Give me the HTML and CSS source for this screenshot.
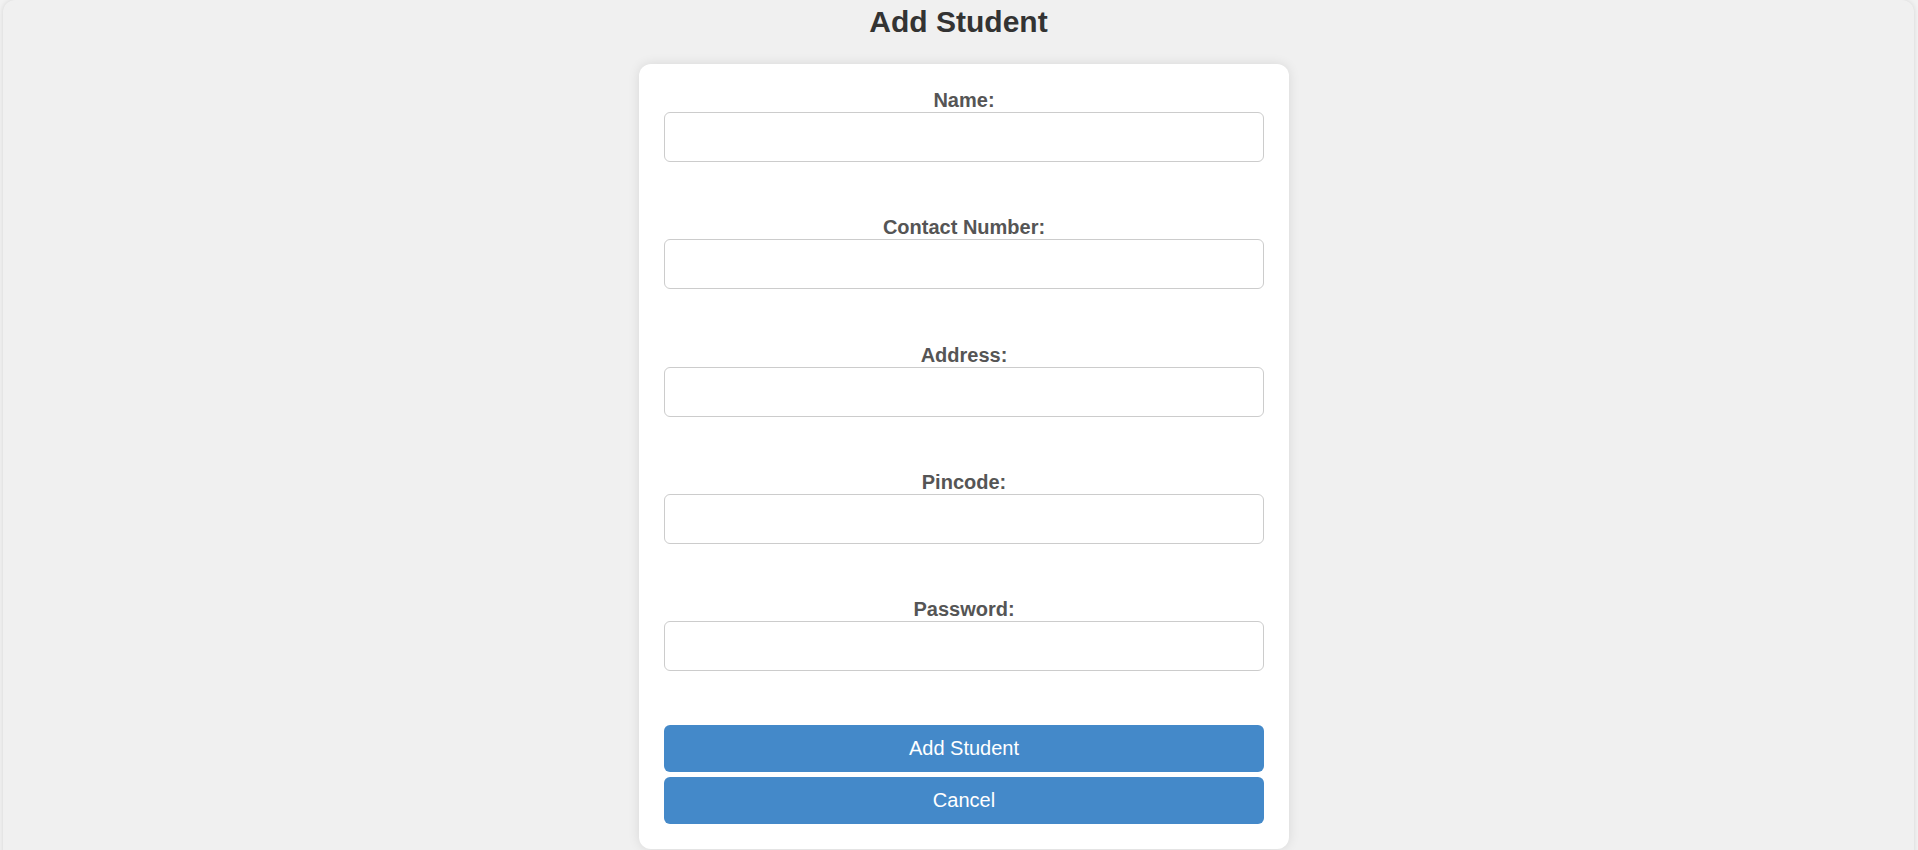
FILE: index.html
```html
<!DOCTYPE html>
<html lang="en">
<head>
<meta charset="utf-8">
<title>Add Student</title>
<link rel="stylesheet" href="styles.css">
</head>
<body>
<div class="page">
  <h2 class="title">Add Student</h2>
  <form class="card">
    <div class="field">
      <label for="name">Name:</label>
      <input id="name" type="text">
    </div>
    <div class="field">
      <label for="contact">Contact Number:</label>
      <input id="contact" type="text">
    </div>
    <div class="field">
      <label for="address">Address:</label>
      <input id="address" type="text">
    </div>
    <div class="field">
      <label for="pincode">Pincode:</label>
      <input id="pincode" type="text">
    </div>
    <div class="field">
      <label for="password">Password:</label>
      <input id="password" type="password">
    </div>
    <div class="actions">
      <button type="button" class="btn">Add Student</button>
      <button type="button" class="btn">Cancel</button>
    </div>
  </form>
</div>
</body>
</html>
```
FILE: styles.css
```css
html, body {
  margin: 0;
  padding: 0;
  background: #f2f2f2;
  font-family: "Liberation Sans", Arial, sans-serif;
  overflow: hidden;
}

.page {
  margin: 0 4px 0 3px;
  padding-top: 5px;
  min-height: 900px;
  background: #f0f0f0;
  border-radius: 12px;
  box-shadow: 0 0 5px rgba(0, 0, 0, 0.12);
  display: flex;
  flex-direction: column;
}

.title {
  margin: 0 0 25px;
  text-align: center;
  font-size: 30px;
  font-weight: bold;
  color: #333;
  line-height: 34px;
}

.card {
  box-sizing: border-box;
  width: 650px;
  margin-left: calc(50% - 319.5px);
  padding: 25px;
  background: #fff;
  border-radius: 12px;
  box-shadow: 0 0 12px rgba(0, 0, 0, 0.1);
  display: flex;
  flex-direction: column;
}

.field {
  display: flex;
  flex-direction: column;
  margin-bottom: 54.3px;
}

.field label {
  text-align: center;
  font-size: 20px;
  font-weight: bold;
  color: #555;
  line-height: 23px;
}

.field input {
  box-sizing: border-box;
  height: 50px;
  width: 100%;
  margin: 0;
  border: 1px solid #ccc;
  border-radius: 6px;
  background: #fff;
  font-size: 20px;
  font-family: inherit;
  padding: 0 12px;
}

.actions {
  display: flex;
  flex-direction: column;
  gap: 5px;
}

.btn {
  height: 47px;
  width: 100%;
  border: none;
  border-radius: 6px;
  background: #4489c9;
  color: #fff;
  font-family: "Liberation Sans", Arial, sans-serif;
  font-size: 20px;
  padding: 0;
}
```
